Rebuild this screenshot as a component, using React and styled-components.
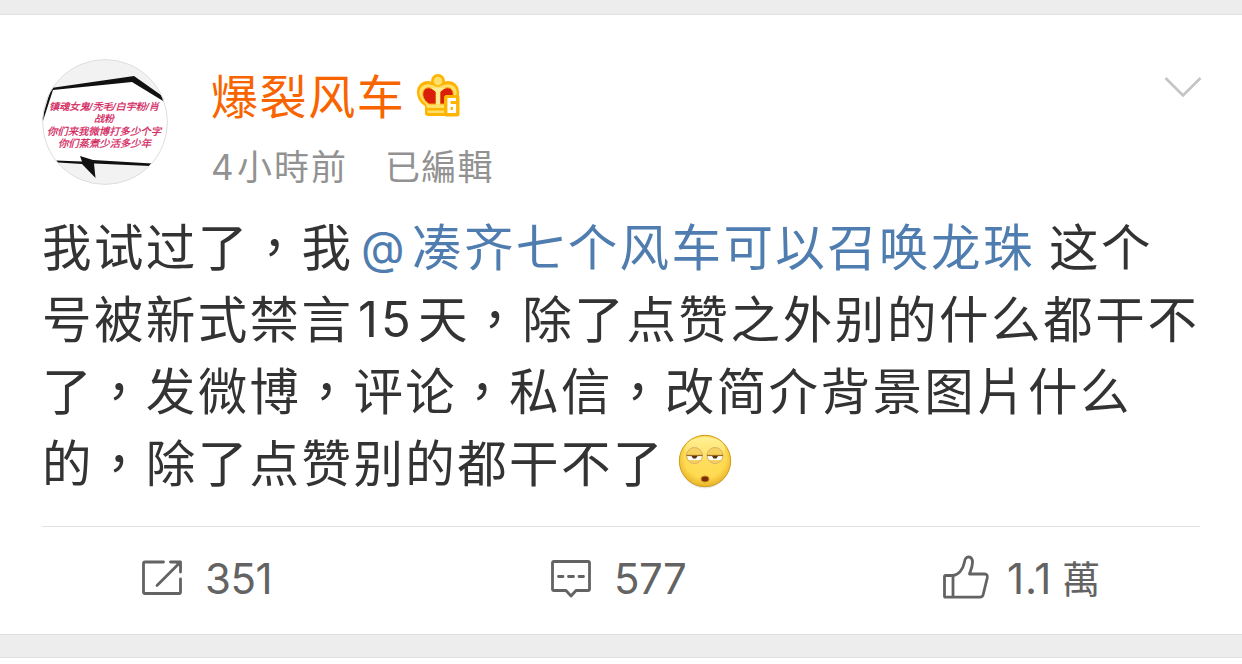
import React from "react";
import styled, { createGlobalStyle } from "styled-components";

const Global = createGlobalStyle`
  * { box-sizing: border-box; }
  body {
    margin: 0;
    background: #fff;
    font-family: Inter, "Noto Sans CJK TC", sans-serif;
    font-weight: 400;
    color: #333;
  }
`;

const Page = styled.div`
  height: 664px;
  display: flex;
  flex-direction: column;
  overflow: hidden;
`;

const Gap = styled.div`
  flex: none;
  height: ${(p) => p.$height}px;
  background: #ededed;
  border-top: ${(p) => (p.$topLine ? "1px solid #dfdfdf" : "0")};
  border-bottom: 1px solid #e1e1e1;
`;

const Card = styled.article`
  flex: none;
  height: 619px;
  padding: 44px 42px 0;
`;

const Header = styled.header`
  display: flex;
  height: 150px;
`;

const Avatar = styled.svg`
  flex: none;
  width: 126px;
  height: 126px;
`;

const Author = styled.div`
  flex: 1;
  padding-left: 43px;
`;

const NameRow = styled.div`
  display: flex;
  align-items: center;
  height: 76px;
`;

const Name = styled.span`
  width: 206px;
  font-size: 47px;
  letter-spacing: 1.6px;
  line-height: 76px;
  color: #f86400;
  white-space: nowrap;
`;

const Meta = styled.div`
  display: flex;
  height: 64px;
  line-height: 64px;
  font-size: 35px;
  letter-spacing: 1.3px;
  color: #929292;
  white-space: nowrap;
`;

const Time = styled.span`
  width: 174px;
  letter-spacing: 2px;
`;

const Digit = styled.span`
  display: inline-block;
  width: 26px;
`;

const Chevron = styled.svg`
  flex: none;
  width: 38px;
  height: 24px;
  margin: 17px -2px 0 2px;
`;

const Body = styled.div`
  height: 318px;
  padding-top: 3px;
  border-bottom: 1px solid #e2e2e2;
`;

const Line = styled.p`
  display: flex;
  margin: 0;
  height: 72px;
  line-height: 72px;
  font-size: 49.5px;
  letter-spacing: 2.4px;
  white-space: nowrap;
`;

const Run = styled.span`
  flex: none;
  width: ${(p) => (p.$width ? `${p.$width}px` : "auto")};
  letter-spacing: ${(p) => (p.$spacing ? `${p.$spacing}px` : "inherit")};
`;

const Mention = styled(Run)`
  display: flex;
  color: #507daf;
`;

const Latin = styled.span`
  display: inline-block;
  flex: none;
  width: ${(p) => p.$width}px;
  font-size: ${(p) => p.$size}px;
  letter-spacing: ${(p) => p.$spacing || 0}px;
`;

const Actions = styled.footer`
  display: grid;
  grid-template-columns: 409px 392px 1fr;
  height: 107px;
  padding-bottom: 5px;
`;

const Action = styled.div`
  display: flex;
  align-items: center;
  padding-left: 99px;
  color: #636363;
`;

const ActionIcon = styled.svg`
  flex: none;
  width: 48px;
  height: 48px;
  fill: none;
  stroke: #636363;
  stroke-width: 2.8;
  stroke-linejoin: round;
  stroke-linecap: round;
`;

const Count = styled.span`
  display: flex;
  align-items: center;
  padding: 1px 0 0 ${(p) => p.$pad}px;
  font-size: 42px;
  line-height: 60px;
  letter-spacing: ${(p) => p.$spacing}px;
`;

const Unit = styled.span`
  padding-left: 10px;
  font-size: 38px;
`;

function AvatarPicture() {
  const hand = {
    fill: "#d3245d",
    fontFamily: '"Liberation Sans", "Noto Sans CJK SC", sans-serif',
    fontWeight: 400,
    fontStyle: "italic",
    stroke: "#d3245d",
    strokeWidth: 0.25,
    lengthAdjust: "spacingAndGlyphs",
  };
  return (
    <Avatar viewBox="0 0 126 126">
      <defs>
        <clipPath id="face"><circle cx="63" cy="63" r="62.5" /></clipPath>
      </defs>
      <g clipPath="url(#face)">
        <rect width="126" height="126" fill="#f2f2f2" />
        <path d="M0 60 9 31 91 22 126 44V106H110L14 102 0 85Z" fill="#fff" />
        <path d="M0 60 9 29 92 17 126 41V45L90 23 11 31 1 62Z" fill="#111" />
        <path d="M14 101.5 40 102.5 38 97 51 101 110 104.5 108 107 52 104.5 53.5 119 40 105 16 103.5Z" fill="#111" />
        <text x="7" y="50.5" fontSize="9.6" textLength="110" {...hand}>镇魂女鬼/秃毛/白宇粉/肖</text>
        <text x="52" y="62.5" fontSize="9.6" textLength="20" {...hand}>战粉</text>
        <text x="5" y="75.5" fontSize="10" textLength="114" {...hand}>你们来我微博打多少个字</text>
        <text x="16" y="88" fontSize="10" textLength="93" {...hand}>你们蒸煮少活多少年</text>
      </g>
      <circle cx="63" cy="63" r="62.4" fill="none" stroke="#dedede" />
    </Avatar>
  );
}

const CrownSvg = styled.svg`
  flex: none;
  width: 44px;
  height: 44px;
  margin-bottom: 2px;
`;

function Crown() {
  return (
    <CrownSvg viewBox="0 0 44 44">
      <circle cx="21" cy="7" r="7" fill="#ffb400" />
      <path d="M8 39V32C3 29 0 24 0 18 0 10 8 5 15 8H27C34 5 42 10 42 18V42H11Q8 42 8 39Z" fill="#ffb400" />
      <path d="M10 34 9 30C5 27 2.5 23 2.5 18 2.5 12 9 8.5 15 11L21 13 27 11C33 8.5 39.5 12 39.5 18V34Z" fill="#ffe06a" />
      <path d="M10 36.500H28V39H11Z" fill="#ffe06a" />
      <circle cx="21" cy="7" r="4.300" fill="#ffe06a" />
      <path d="M18 30H12C6 26 4.5 20 7 16 10 12 16 14 19 18V30ZM24 30H30C36 26 37.500 20 35 16 32 12 26 14 23 18V30Z" fill="#d91e09" stroke="#f7a800" />
      <path d="M14 14H28L23 18V30H19V18Z" fill="#ffeb95" />
      <rect x="27" y="21" width="15.500" height="21.500" rx="2.500" fill="#ffb400" />
      <path d="M39 25.500H32V37.500H37.500V31.500H33" fill="none" stroke="#fff" strokeWidth="3.200" />
    </CrownSvg>
  );
}

const FaceSvg = styled.svg`
  flex: none;
  width: 60px;
  height: 62px;
  margin: 1px 0 0 10px;
`;

function TiredFace() {
  return (
    <FaceSvg viewBox="0 0 60 62">
      <defs>
        <radialGradient id="skin" cx="50%" cy="42%" r="62%">
          <stop offset="0" stopColor="#ffdf62" />
          <stop offset="0.65" stopColor="#ffdb52" />
          <stop offset="1" stopColor="#e3a91d" />
        </radialGradient>
        <linearGradient id="shine" x2="0" y2="1">
          <stop offset="0" stopColor="#fff6a8" stopOpacity="0.8" />
          <stop offset="1" stopColor="#fff6a8" stopOpacity="0" />
        </linearGradient>
      </defs>
      <ellipse cx="30" cy="36" rx="24" ry="23.500" fill="#d8d8d8" opacity="0.6" />
      <circle cx="30" cy="32" r="25.700" fill="url(#skin)" stroke="#cf9d20" strokeWidth="1" />
      <ellipse cx="30" cy="20" rx="20" ry="12" fill="url(#shine)" />
      {[19.5, 40].map((x) => (
        <g key={x}>
          <circle cx={x} cy="26.500" r="8" fill="#f6d25c" stroke="#d9b070" />
          <path d={`M${x - 7.5} 27H${x + 7.5}L${x + 6} 31H${x - 6}Z`} fill="#fff" />
          <path d={`M${x - 8} 26.500H${x + 8}`} stroke="#9b6b22" strokeWidth="1.300" />
          <path d={`M${x - 3} 27H${x + 3}L${x + 1.5} 29.500H${x - 1.5}Z`} fill="#593011" />
        </g>
      ))}
      <ellipse cx="30" cy="50" rx="4" ry="3" fill="#7c2d08" stroke="#c58524" />
    </FaceSvg>
  );
}

export default function App() {
  return (
    <Page>
      <Global />
      <Gap $height={15} />
      <Card>
        <Header>
          <AvatarPicture />
          <Author>
            <NameRow>
              <Name>爆裂风车</Name>
              <Crown />
            </NameRow>
            <Meta>
              <Time><Digit>4</Digit>小時前</Time>
              <span>已編輯</span>
            </Meta>
          </Author>
          <Chevron viewBox="0 0 38 24" fill="none" stroke="#c4c4c4" strokeWidth="2.600">
            <path d="M1.500 2 19 19.500 36.500 2" />
          </Chevron>
        </Header>
        <Body>
          <Line>
            <Run $width={319}>我试过了，我</Run>
            <Mention $width={688}><Latin $width={51} $size={45}>@</Latin>凑齐七个风车可以召唤龙珠</Mention>
            <Run>这个</Run>
          </Line>
          <Line>
            <Run $width={316}>号被新式禁言</Run>
            <Latin $width={60} $size={49} $spacing={3}>15</Latin>
            <Run $spacing={2.6}>天，除了点赞之外别的什么都干不</Run>
          </Line>
          <Line>
            <Run>了，发微博，评论，私信，改简介背景图片什么</Run>
          </Line>
          <Line>
            <Run>的，除了点赞别的都干不了</Run>
            <TiredFace />
          </Line>
        </Body>
        <Actions>
          <Action>
            <ActionIcon viewBox="0 0 48 48">
              <path d="M22.500 8H4Q2.500 8 2.500 9.500V38Q2.500 39.500 4 39.500H38Q39.500 39.500 39.500 38V25M29.500 8H39.500V18M39 8.500 16 31.500" />
              <path d="M34 8H39.500V13.500Z" fill="#636363" stroke="none" />
            </ActionIcon>
            <Count $pad={16} $spacing={-0.5}>351</Count>
          </Action>
          <Action>
            <ActionIcon viewBox="0 0 48 48">
              <path d="M4 7.500H38Q39.500 7.500 39.500 9V35Q39.500 36.500 38 36.500H26L21 42 16 36.500H4Q2.500 36.500 2.500 35V9Q2.500 7.500 4 7.500ZM8.500 22.500H13M18.500 22.500H23.500M29 22.500H33.500" />
            </ActionIcon>
            <Count $pad={16} $spacing={-0.6}>577</Count>
          </Action>
          <Action>
            <ActionIcon viewBox="0 0 48 48">
              <path d="M11 21.500H3.500Q2.500 21.500 2.500 22.500V42Q2.500 43.200 3.500 43.200H38Q40.500 43.200 41.200 40.500L45.200 24Q46 20 42.500 20H27.500C28.500 17 30.500 13 30.500 8.500 30.500 1.500 23 1 22.500 8 21 16 16 21 11 21.500V43" />
            </ActionIcon>
            <Count $pad={17} $spacing={0.9}>1.1<Unit>萬</Unit></Count>
          </Action>
        </Actions>
      </Card>
      <Gap $height={24} $topLine />
    </Page>
  );
}
